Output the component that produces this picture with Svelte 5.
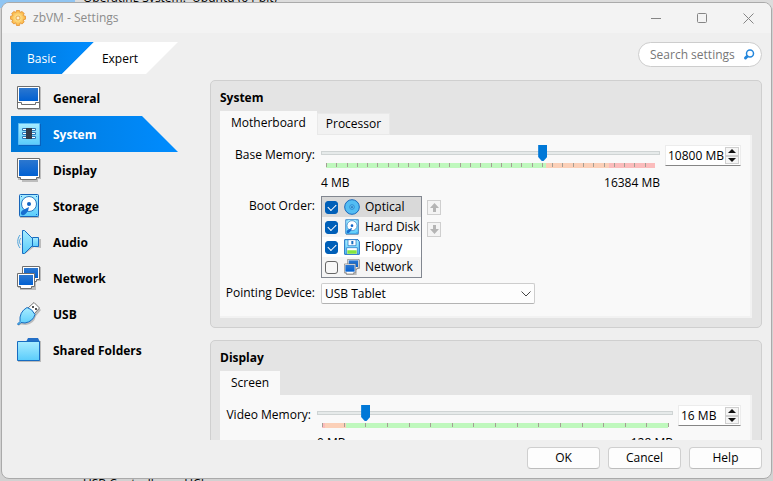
<script>
  const pages = ['General', 'System', 'Display', 'Storage', 'Audio', 'Network', 'USB', 'Shared Folders'];
  let page = $state('System');
  let boot = $state([
    { name: 'Optical', icon: 'optical', on: true },
    { name: 'Hard Disk', icon: 'Storage', on: true },
    { name: 'Floppy', icon: 'floppy', on: true },
    { name: 'Network', icon: 'Network', on: false }
  ]);
  let current = $state('Optical');
  let baseMemory = $state(10800);
  let videoMemory = $state(16);
  const ticks = (n) => Array.from({ length: n + 1 }, (_, i) => (i * 100) / n);
  const baseTicks = ticks(32).slice(0, -1);
  const videoTicks = ticks(16);
</script>

{#snippet icon(name, size)}
  <svg class="icon" width={size} height={size} viewBox="0 0 24 24" aria-hidden="true">
    {#if name === 'General'}
      <path d="M1 1h23v23H1z" fill="#bdbdbd" />
      <path d="M.5.5h22v22H.5z" fill="#fff" stroke="#6e6e6e" />
      <path d="M2 2h19v13H2z" fill="url(#screen)" />
      <path d="M1 16.500h3.500v2h14v-2H22" fill="none" stroke="#6e6e6e" />
    {:else if name === 'System'}
      <path d="M2 2h22v22H2z" fill="#0862bd" />
      <path d="M1.500 1.500h21v21h-21z" fill="url(#sky)" stroke="#5bbcf5" />
      <path d="M5.500 6.500h4v2h-4zM5.500 10.500h4v2h-4zM5.500 14.500h4v2h-4zM14.500 6.500h4v2h-4zM14.500 10.500h4v2h-4zM14.500 14.500h4v2h-4z" fill="#fff" stroke="#2a75b5" />
      <path d="M9 6h6v11H9z" fill="#333b48" />
    {:else if name === 'Display'}
      <path d="M1 1h23v20h-3v3H5v-2H1z" fill="#bdbdbd" />
      <path d="M.5.500h22v19h-3v2h-16v-2h-3z" fill="#fff" stroke="#6e6e6e" />
      <path d="M2 2h19v16H2z" fill="url(#screen)" />
    {:else if name === 'Storage'}
      <path d="M3 1h19v23H3z" fill="#bbb" />
      <rect x="2.500" y=".5" width="19" height="22" rx="1" fill="url(#sky)" stroke="#1765b9" />
      <circle cx="12" cy="10" r="7.500" fill="#fff" stroke="#2879c4" />
      <circle cx="12" cy="10" r="2" fill="#1264c4" />
      <path d="M12 13 6 16c-2 1-3 4-1 5 3 1 4-2 6-4z" fill="#176ed0" />
      <path d="M4 2h1v1H4zM19 2h1v1h-1zM19 20h1v1h-1z" fill="#176ed0" />
    {:else if name === 'Audio'}
      <path d="m7 3 10 7 7-1v9l-7-1-9 7z" fill="#bbb" />
      <path d="M5.500.500h2l8 8v7l-8 8h-2z" fill="url(#sky)" stroke="#176cc1" stroke-linejoin="round" />
      <path d="M15.500 7.500h6v9h-6z" fill="url(#sky)" stroke="#176cc1" />
      <path d="M4 8c-2 2-2 5 0 7M3 5c-3 4-3 9 0 13" fill="none" stroke="#4da2d9" />
    {:else if name === 'Network'}
      <path d="M6 1h18v14h-5v9H3v-2H1V8h5z" fill="#bbb" />
      <path d="M5.500.500h17v13h-3v2h-11v-2h-3z" fill="#fff" stroke="#6e6e6e" />
      <path d="M7 2h14v10H7z" fill="url(#screen)" />
      <path d="M.5 7.500h17v13h-3v2h-11v-2h-3z" fill="#fff" stroke="#6e6e6e" />
      <path d="M2 9h14v10H2z" fill="url(#screen)" />
    {:else if name === 'USB'}
      <path d="m18 2 6 6-5 6q-2 8-10 9l-5-.500L1 24l1-3z" fill="#bbb" />
      <path d="m17 .500 5.500 5.500-5.500 6-6-6z" fill="#fff" stroke="#777" />
      <path d="M15 4h2v2h-2zM18 6h2v2h-2z" fill="#555" />
      <path d="M10 5.500q5 1 8 7-2 7-10 8.500l-4-.500L1.500 23l-1-1L3 19.500Q2 10 10 5.500z" fill="url(#sky)" stroke="#176cc1" />
    {:else if name === 'Shared Folders'}
      <path d="M1 3h23v21H1z" fill="#bbb" />
      <path d="m9 4 2-4h10l2 4z" fill="#236fc7" />
      <path d="M.5 3.500h22v19H.5z" fill="url(#sky)" stroke="#176cc1" />
    {:else if name === 'optical'}
      <circle cx="12" cy="12" r="11" fill="#53bdf3" stroke="#1869bd" stroke-width="1.500" />
      <circle cx="12" cy="12" r="3.500" fill="#62c4f2" stroke="#1b76c8" />
      <circle cx="12" cy="12" r="1.300" fill="#1255a5" />
    {:else if name === 'floppy'}
      <path d="M1 1h20l2 3v19H1z" fill="url(#sky)" stroke="#176cc1" stroke-width="1.500" />
      <path d="M6 1h12v9H6z" fill="#fff" stroke="#176cc1" />
      <path d="M11 3h3v5h-3z" fill="#176cc1" />
      <path d="M4 13h16v10H4z" fill="#fff" stroke="#176cc1" />
      <path d="M5 17h14v5H5z" fill="#83e63f" />
    {/if}
  </svg>
{/snippet}

{#snippet spin(label, value, kind)}
  <div class="spin {kind}">
    <input type="text" aria-label={label} {value} />
    <div class="steps">
      <button type="button" aria-label="Increase"><svg width="8" height="4" viewBox="0 0 8 4"><path d="M0 4 4 0l4 4z" fill="#111" /></svg></button>
      <button type="button" aria-label="Decrease"><svg width="8" height="4" viewBox="0 0 8 4"><path d="m0 0 4 4 4-4z" fill="#111" /></svg></button>
    </div>
  </div>
{/snippet}

<svg class="defs" width="0" height="0" aria-hidden="true">
  <defs>
    <linearGradient id="screen" x1="0" y1="0" x2="0" y2="1"><stop stop-color="#2c77cf" /><stop offset="1" stop-color="#0060d2" /></linearGradient>
    <linearGradient id="sky" x1="0" y1="0" x2="0" y2="1"><stop stop-color="#a8ecff" /><stop offset="1" stop-color="#5accfb" /></linearGradient>
    <radialGradient id="gold"><stop offset=".3" stop-color="#ffe28a" /><stop offset="1" stop-color="#f8b040" /></radialGradient>
  </defs>
</svg>

<div class="desktop">
  <div class="behind top">Operating System:&nbsp; Ubuntu (64-bit)</div>
  <div class="behind bottom">USB Controller:&nbsp;&nbsp; xHCI</div>

  <div class="window">
    <header class="titlebar">
      <svg width="16" height="16" viewBox="0 0 16 16" aria-hidden="true">
        <path d="M6.500.5h3l.6 2 2-1.100 2.100 2.100-1.100 2 2.400.7v3l-2.400.7 1.100 2-2.100 2.100-2-1.100-.6 2.600h-3l-.7-2.600-2 1.100-2.100-2.100 1.100-2L.5 9.200v-3l2.300-.7-1.100-2 2.100-2.100 2 1.100z" fill="url(#gold)" stroke="#e28b25" stroke-width=".7" />
        <circle cx="8" cy="8" r="2" fill="#fff1cd" stroke="#de8b2a" stroke-width=".7" />
      </svg>
      <span class="caption">zbVM - Settings</span>
      <div class="controls">
        <button type="button" aria-label="Minimize"><svg width="11" height="11" viewBox="0 0 11 11"><path d="M0 5.500h10" /></svg></button>
        <button type="button" aria-label="Maximize"><svg width="11" height="11" viewBox="0 0 11 11"><rect x=".5" y=".5" width="9" height="9" rx="1" /></svg></button>
        <button type="button" aria-label="Close"><svg width="11" height="11" viewBox="0 0 11 11"><path d="m.5.500 10 10M10.500.500l-10 10" /></svg></button>
      </div>
    </header>

    <div class="body">
      <aside>
        <div class="mode">
          <button type="button" class="basic">Basic</button>
          <button type="button" class="expert">Expert</button>
        </div>
        <nav>
          {#each pages as name}
            <button type="button" class:selected={page === name} onclick={() => (page = name)}>
              {@render icon(name, 24)}<span>{name}</span>
            </button>
          {/each}
        </nav>
      </aside>

      <main>
        <div class="search">
          <input type="text" placeholder="Search settings" aria-label="Search settings" />
          <svg width="12" height="12" viewBox="0 0 12 12" aria-hidden="true"><circle cx="7" cy="4.500" r="3.500" fill="#fff" stroke="#2386dc" stroke-width="1.500" /><path d="M4 7.500 2.500 9" stroke="#2386dc" stroke-width="3" stroke-linecap="round" /></svg>
        </div>

        <div class="scroll">
          <section>
            <h2>System</h2>
            <div class="tabs">
              <button type="button" class="tab active">Motherboard</button>
              <button type="button" class="tab">Processor</button>
            </div>
            <div class="panel system">
              <label for="base">Base Memory:</label>
              <div class="memory">
                <div class="slider">
                  <input id="base" type="range" min="4" max="16384" bind:value={baseMemory} />
                  <div class="scale base">
                    {#each baseTicks as t}<i style="left: {t}%"></i>{/each}
                  </div>
                  <div class="limits"><span>4 MB</span><span>16384 MB</span></div>
                </div>
                {@render spin('Base memory', `${baseMemory} MB`, 'wide')}
              </div>

              <span class="label">Boot Order:</span>
              <div class="boot">
                <div class="list">
                  {#each boot as item}
                    <label class:current={current === item.name}>
                      <input type="checkbox" bind:checked={item.on} />
                      {@render icon(item.icon, 16)}
                      <span>{item.name}</span>
                    </label>
                  {/each}
                </div>
                <div class="move">
                  <button type="button" disabled aria-label="Move up"><svg width="9" height="9" viewBox="0 0 9 9"><path d="M4.500 0 9 5H6v4H3V5H0z" /></svg></button>
                  <button type="button" disabled aria-label="Move down"><svg width="9" height="9" viewBox="0 0 9 9"><path d="M4.500 9 9 4H6V0H3v4H0z" /></svg></button>
                </div>
              </div>

              <label for="pointing">Pointing Device:</label>
              <div class="combo">
                <select id="pointing"><option>USB Tablet</option><option>PS/2 Mouse</option></select>
                <svg width="10" height="6" viewBox="0 0 10 6" aria-hidden="true"><path d="m.5.500 4.500 4.500L9.500.500" fill="none" stroke="#444" /></svg>
              </div>
            </div>
          </section>

          <section>
            <h2>Display</h2>
            <div class="tabs"><button type="button" class="tab active">Screen</button></div>
            <div class="panel display">
              <label for="video">Video Memory:</label>
              <div class="memory">
                <div class="slider">
                  <input id="video" type="range" min="0" max="128" bind:value={videoMemory} />
                  <div class="scale video">
                    {#each videoTicks as t}<i style="left: {t}%"></i>{/each}
                  </div>
                  <div class="limits"><span>0 MB</span><span>128 MB</span></div>
                </div>
                {@render spin('Video memory', `${videoMemory} MB`, 'narrow')}
              </div>
            </div>
          </section>
        </div>

        <footer>
          <button type="button">OK</button>
          <button type="button">Cancel</button>
          <button type="button">Help</button>
        </footer>
      </main>
    </div>
  </div>
</div>

<style>
  .desktop, .desktop * { box-sizing: border-box; }
  .desktop {
    position: relative;
    height: 100vh;
    padding: 2px 1px;
    overflow: hidden;
    background: linear-gradient(90deg, #90c5f2 75px, #dcdcdc 75px) top / 100% 8px no-repeat, #d2d2d2;
    color: #000;
    font: 12px/16px "Open Sans", "Noto Sans", sans-serif;
  }
  .defs { position: absolute; }
  button, input, select { margin: 0; padding: 0; border: 0; background: none; color: inherit; font: inherit; }
  button { white-space: nowrap; }
  svg { display: block; flex: none; }
  .behind { position: absolute; left: 83px; white-space: nowrap; }
  .top { top: -10px; }
  .bottom { bottom: -11px; }

  .window {
    position: relative;
    display: flex;
    flex-direction: column;
    height: 100%;
    border: 1px solid #aaa;
    border-radius: 8px;
    background: #efefef;
    overflow: hidden;
  }
  .titlebar {
    display: flex;
    align-items: center;
    gap: 7px;
    flex: none;
    height: 30px;
    padding: 0 17px 0 8px;
    background: #f3f3f3;
    color: #8b8b8b;
  }
  .controls { display: flex; gap: 35px; margin-left: auto; }
  .controls path, .controls rect { fill: none; stroke: #858585; }
  .body { display: flex; flex: 1; min-height: 0; padding: 9px; }
  aside { flex: none; width: 199px; }

  .mode { display: flex; height: 32px; margin-bottom: 6px; }
  .basic, .expert { height: 32px; padding-top: 2px; }
  .basic {
    width: 83px;
    padding-right: 22px;
    background: linear-gradient(90deg, #0078d7, #008cff);
    color: #fff;
    clip-path: polygon(0 0, 100% 0, calc(100% - 32px) 100%, 0 100%);
  }
  .expert {
    width: 116px;
    margin-left: -32px;
    background: #fff;
    clip-path: polygon(32px 0, 100% 0, calc(100% - 32px) 100%, 0 100%);
  }
  nav { display: flex; flex-direction: column; }
  nav button {
    display: flex;
    align-items: center;
    gap: 12px;
    width: 167px;
    height: 36px;
    padding-left: 6px;
    font-weight: 700;
    text-align: left;
  }
  nav span { padding-top: 2px; }
  nav .selected {
    background: linear-gradient(90deg, #0078d7, #008cff);
    color: #fff;
    clip-path: polygon(0 0, calc(100% - 36px) 0, 100% 100%, 0 100%);
  }

  main { display: flex; flex-direction: column; flex: 1; min-width: 0; }
  .search {
    display: flex;
    align-items: center;
    align-self: flex-end;
    flex: none;
    width: 124px;
    height: 25px;
    margin-bottom: 13px;
    padding: 0 6px 0 11px;
    border: 1px solid #cdcdcd;
    border-radius: 13px;
    background: #fff;
  }
  .search input { flex: 1; min-width: 0; outline: 0; }
  .search input::placeholder { color: #777; opacity: 1; }

  .scroll { display: flex; flex-direction: column; gap: 12px; flex: 1; min-height: 0; overflow: hidden; }
  section {
    flex: none;
    padding: 9px;
    border: 1px solid #cfcfcf;
    border-radius: 5px;
    background: #e4e4e4;
  }
  h2 { margin: 0 0 5px; font-size: 12px; line-height: 16px; font-weight: 700; }
  .tabs { display: flex; align-items: flex-end; height: 24px; }
  .tab { height: 22px; padding: 0 8px; border: 1px solid #e9e9e9; background: #f2f2f2; }
  .tab.active { height: 24px; padding: 0 11px; border: 0; background: #f9f9f9; }
  .panel {
    display: grid;
    align-items: start;
    column-gap: 6px;
    padding: 10px 9px 12px 10px;
    border-right: 2px solid #f2f2f2;
    border-bottom: 2px solid #f2f2f2;
    background: #f9f9f9;
  }
  .system { grid-template-columns: 85px 1fr; row-gap: 5px; }
  .display { grid-template-columns: 81px 1fr; }
  .panel > label, .label { display: flex; justify-content: flex-end; white-space: nowrap; line-height: 20px; }

  .memory { display: flex; align-items: flex-start; gap: 5px; }
  .slider { flex: 1; min-width: 0; }
  .slider input { display: block; width: 100%; height: 16px; appearance: none; }
  .slider input::-webkit-slider-runnable-track { height: 4px; border: 1px solid #cfd4d4; background: #e6eaea; }
  .slider input::-webkit-slider-thumb {
    appearance: none;
    width: 9px;
    height: 16px;
    margin-top: -7px;
    background: #0078d7;
    clip-path: polygon(0 0, 100% 0, 100% 75%, 60% 100%, 40% 100%, 0 75%);
  }
  .scale { position: relative; height: 5px; margin: 2px 5px 0; }
  .base { background: linear-gradient(90deg, #bff8bd 67%, #fbd0b8 67%, #fbd0b8 86%, #fbbcbc 86%); }
  .video { background: linear-gradient(90deg, #fbbcbc 1%, #fbd0b8 1%, #fbd0b8 7%, #bff8bd 7%); }
  .scale i { position: absolute; top: 0; width: 1px; height: 4px; background: #a49e94; }
  .limits { display: flex; justify-content: space-between; margin-top: 7px; }

  .spin { display: flex; flex: none; height: 21px; padding: 1px 1px 1px 2px; border: 1px solid #ececec; border-bottom-color: #868686; background: #fff; }
  .wide { width: 76px; }
  .narrow { width: 63px; }
  .spin input { flex: 1; min-width: 0; outline: 0; }
  .steps { display: flex; flex-direction: column; flex: none; width: 14px; }
  .steps button { display: grid; place-items: center; flex: 1; border: 1px solid #cfcfcf; background: #f5f5f5; }

  .boot { display: flex; align-items: flex-start; gap: 5px; }
  .list { width: 101px; border: 1px solid #828790; background: #fff; }
  .list label { display: flex; align-items: center; height: 20px; padding-left: 3px; white-space: nowrap; }
  .list label:nth-child(even) { background: #f5f5f5; }
  .list label.current { background: #d9d9d9; }
  .list :global(.icon) { margin: 0 5px 0 6px; }
  .list input { appearance: none; flex: none; width: 13px; height: 13px; border: 1px solid #666; border-radius: 3px; background: #f7f7f7; }
  .list input:checked {
    display: grid;
    place-items: center;
    border-color: #005fb8;
    background: #005fb8;
  }
  .list input:checked::before {
    content: "";
    width: 7px;
    height: 4px;
    margin-bottom: 2px;
    border: solid #fff;
    border-width: 0 0 1px 1px;
    transform: rotate(-45deg);
  }
  .move { display: flex; flex-direction: column; gap: 7px; padding-top: 4px; }
  .move button { display: grid; place-items: center; width: 14px; height: 15px; border: 1px solid #cfcfcf; background: #f4f4f4; }
  .move path { fill: #b5b5b5; }

  .combo { position: relative; width: 214px; }
  .combo select {
    display: block;
    appearance: none;
    width: 100%;
    height: 21px;
    padding: 0 20px 0 3px;
    border: 1px solid #cdcdcd;
    border-bottom-color: #b3b3b3;
    border-radius: 2px;
    background: #fdfdfd;
  }
  .combo svg { position: absolute; top: 8px; right: 4px; pointer-events: none; }

  footer { display: flex; flex: none; justify-content: flex-end; gap: 8px; padding-top: 7px; }
  footer button { width: 73px; height: 22px; border: 1px solid #cfcfcf; border-bottom-color: #bdbdbd; border-radius: 4px; background: #fdfdfd; }
</style>
